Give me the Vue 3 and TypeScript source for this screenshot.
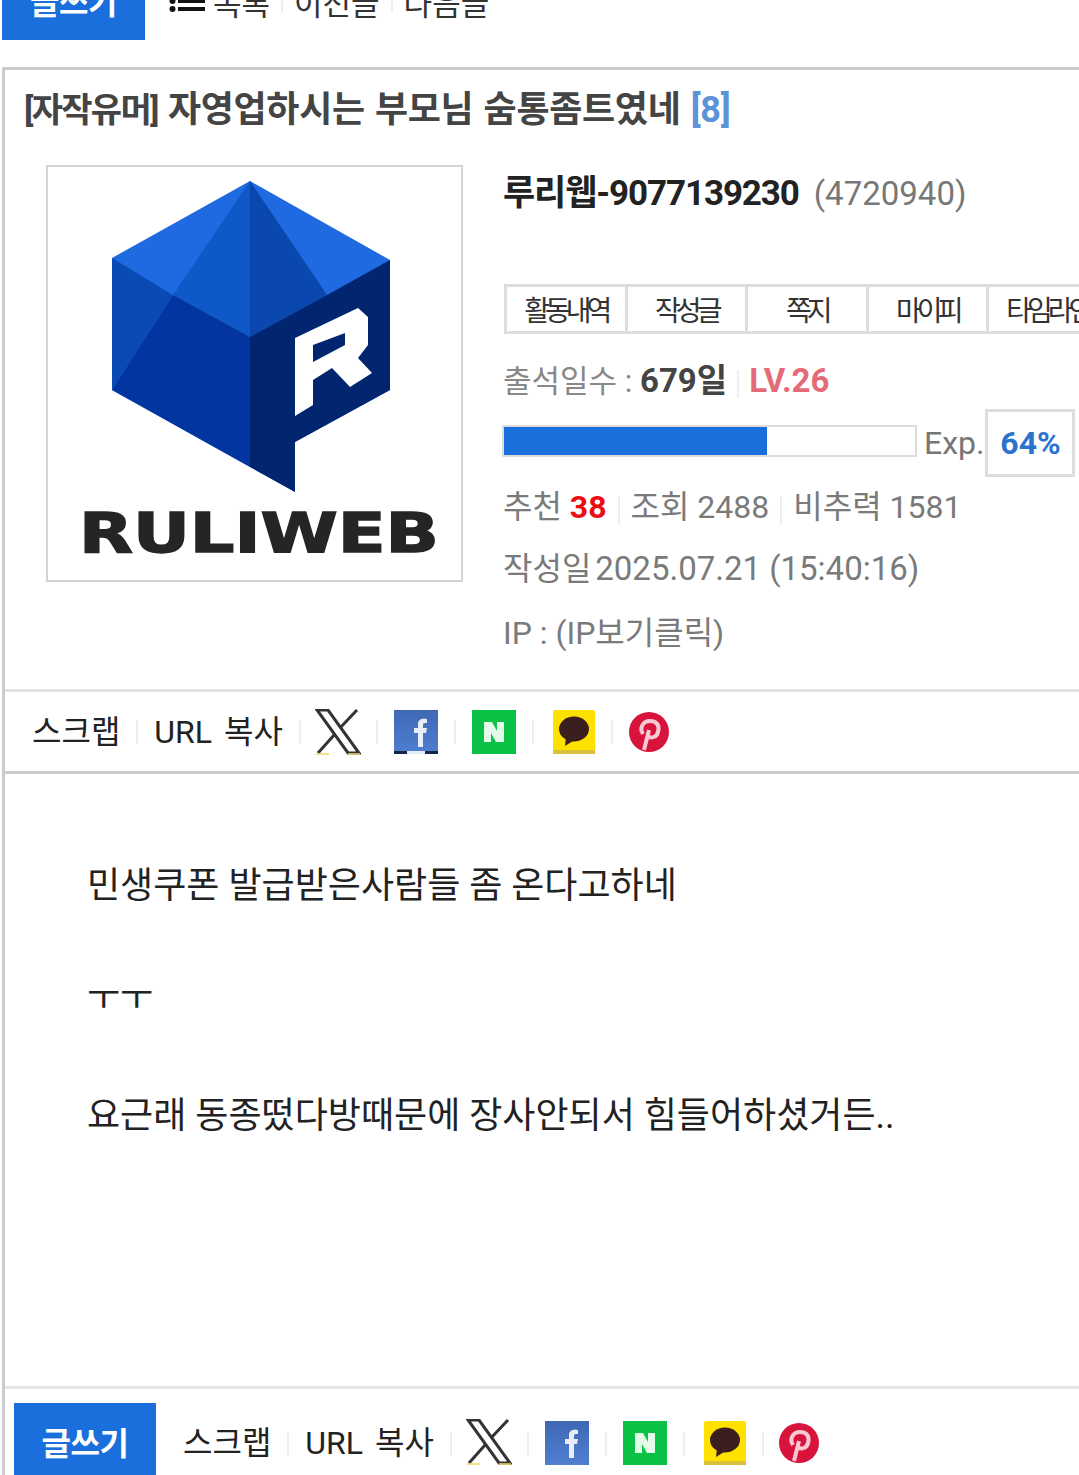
<script setup lang="ts">
const tabs: string[] = ['활동내역', '작성글', '쪽지', '마이피', '타임라인']
</script>

<template>
  <div class="page">
    <div class="topbar">
      <button class="write">글쓰기</button>
      <nav class="topnav">
        <svg class="listicon" width="36" height="24" viewBox="0 0 36 24">
          <circle cx="3.5" cy="3" r="3" fill="#111" />
          <circle cx="3.5" cy="11" r="3" fill="#111" />
          <rect x="9" y="1" width="27" height="4" fill="#111" />
          <rect x="9" y="9" width="27" height="4" fill="#111" />
        </svg>
        <span>목록</span><i class="sep"></i><span>이전글</span><i class="sep"></i><span>다음글</span>
      </nav>
    </div>

    <main class="board">
      <h1 class="title"><span class="prefix">[자작유머]</span> 자영업하시는 부모님 숨통좀트였네 <em>[8]</em></h1>

      <section class="profile">
        <div class="avatar">
          <svg width="413" height="413" viewBox="48 167 413 413">
            <polygon points="250,181 112,258 112,390 295,492 295,442 390,390 390,260" fill="#1f6ae0" />
            <polygon points="250,181 173,295 250,337" fill="#0e58c8" />
            <polygon points="250,181 327,295 250,337" fill="#0a47ae" />
            <polygon points="112,258 173,295 112,390" fill="#0a4ab5" />
            <polygon points="112,390 173,295 250,337 250,467" fill="#0335a0" />
            <polygon points="250,337 327,295 390,260 390,390 295,442 295,492 250,467" fill="#02256f" />
            <path fill="#fff" fill-rule="evenodd" d="M295 338 L358 308 L368 317 L368 345 L358 358 L372 373 L350 387 L332 368 L313 380 L313 405 L295 416 Z M313 345 L345 333 L345 345 L313 362 Z" />
            <text x="79" y="552" class="wordmark" textLength="360" lengthAdjust="spacingAndGlyphs">RULIWEB</text>
          </svg>
        </div>

        <div class="info">
          <div class="nameline">
            <strong class="name">루리웹-9077139230</strong>
            <span class="uid">(4720940)</span>
          </div>
          <div class="tabs">
            <a v-for="t in tabs" :key="t" class="tab"><span>{{ t }}</span></a>
          </div>
          <div class="attend">
            출석일수 : <b>679일</b><i class="sep small"></i><b class="level">LV.26</b>
          </div>
          <div class="exp">
            <div class="track"><div class="fill" :style="{ width: '64%' }"></div></div>
            <span class="explabel">Exp.</span>
            <span class="expbox">64%</span>
          </div>
          <div class="stat stats1">
            추천 <b class="red">38</b><i class="sep small"></i>조회 2488<i class="sep small"></i>비추력 1581
          </div>
          <div class="stat">작성일 <span class="num">2025.07.21 (15:40:16)</span></div>
          <div class="stat ip">IP : (IP보기클릭)</div>
        </div>
      </section>

      <div class="share sharetop">
        <span class="slink">스크랩</span><i class="sep"></i><span class="slink">URL 복사</span><i class="sep"></i>
        <svg class="ico x" width="46" height="46" viewBox="0 0 46 46">
          <path d="M2 1 H13 L44 44 H33 Z" fill="#fff" stroke="#333" stroke-width="3" />
          <path d="M42 1 L25 19 M20 25 L3 44" stroke="#333" stroke-width="3" fill="none" />
          <path d="M1 45 H14 M33 45 H45" stroke="#e9d96a" stroke-width="1.5" />
        </svg><i class="sep"></i>
        <svg class="ico" width="44" height="44" viewBox="0 0 44 44">
          <defs><linearGradient id="fb" x1="0" y1="0" x2="0" y2="1"><stop offset="0" stop-color="#3f68b4" /><stop offset="1" stop-color="#4f7fd0" /></linearGradient></defs>
          <rect width="44" height="44" fill="url(#fb)" />
          <path d="M24 37 V23 H20 V18 H24 V14 C24 10 27 8 33 9 V13 C30 13 29 13 29 15 V18 H33 L32 23 H29 V37 Z" fill="#e8eef8" />
          <rect y="41" width="13" height="3" fill="#14264a" /><rect x="13" y="41" width="18" height="3" fill="#e6ecf6" /><rect x="31" y="41" width="13" height="3" fill="#14264a" />
        </svg><i class="sep"></i>
        <svg class="ico" width="44" height="44" viewBox="0 0 44 44">
          <rect width="44" height="44" fill="#0bc246" />
          <path d="M12 12 H20 L25 21 V12 H32 V32 H24 L19 23 V32 H12 Z" fill="#e4fbe9" />
        </svg><i class="sep kk"></i>
        <svg class="ico" width="42" height="44" viewBox="0 0 42 44">
          <rect width="42" height="44" rx="2" fill="#ffe100" />
          <rect y="40" width="42" height="4" fill="#d8bf3c" />
          <ellipse cx="21" cy="19" rx="15" ry="12.5" fill="#3b1e1e" />
          <path d="M13 27 L12 36 L20 31 Z" fill="#3b1e1e" />
        </svg><i class="sep"></i>
        <svg class="ico" width="40" height="44" viewBox="0 0 40 44">
          <circle cx="20" cy="22" r="20" fill="#d9143c" />
          <path d="M15 40 L20 20 M14 24 C10 18 14 11 21 11 C28 11 31 16 29 22 C28 27 22 29 19 26" stroke="#f7c9d2" stroke-width="4" fill="none" />
        </svg>
      </div>

      <article class="content">
        <p>민생쿠폰 발급받은사람들 좀 온다고하네</p>
        <p class="blank">&nbsp;</p>
        <p class="cry">ㅜㅜ</p>
        <p class="blank">&nbsp;</p>
        <p>요근래 동종떴다방때문에 장사안되서 힘들어하셨거든..</p>
      </article>

      <div class="share sharebottom">
        <button class="write">글쓰기</button>
        <span class="slink first">스크랩</span><i class="sep"></i><span class="slink">URL 복사</span><i class="sep"></i>
        <svg class="ico x" width="46" height="46" viewBox="0 0 46 46">
          <path d="M2 1 H13 L44 44 H33 Z" fill="#fff" stroke="#333" stroke-width="3" />
          <path d="M42 1 L25 19 M20 25 L3 44" stroke="#333" stroke-width="3" fill="none" />
          <path d="M1 45 H14 M33 45 H45" stroke="#e9d96a" stroke-width="1.5" />
        </svg><i class="sep"></i>
        <svg class="ico" width="44" height="44" viewBox="0 0 44 44">
          <rect width="44" height="44" fill="url(#fb)" />
          <path d="M24 37 V23 H20 V18 H24 V14 C24 10 27 8 33 9 V13 C30 13 29 13 29 15 V18 H33 L32 23 H29 V37 Z" fill="#e8eef8" />
        </svg><i class="sep"></i>
        <svg class="ico" width="44" height="44" viewBox="0 0 44 44">
          <rect width="44" height="44" fill="#0bc246" />
          <path d="M12 12 H20 L25 21 V12 H32 V32 H24 L19 23 V32 H12 Z" fill="#e4fbe9" />
        </svg><i class="sep kk"></i>
        <svg class="ico" width="42" height="44" viewBox="0 0 42 44">
          <rect width="42" height="44" rx="2" fill="#ffe100" />
          <rect y="40" width="42" height="4" fill="#d8bf3c" />
          <ellipse cx="21" cy="19" rx="15" ry="12.5" fill="#3b1e1e" />
          <path d="M13 27 L12 36 L20 31 Z" fill="#3b1e1e" />
        </svg><i class="sep"></i>
        <svg class="ico pin" width="40" height="44" viewBox="0 0 40 44">
          <circle cx="20" cy="22" r="20" fill="#d9143c" />
          <path d="M15 40 L20 20 M14 24 C10 18 14 11 21 11 C28 11 31 16 29 22 C28 27 22 29 19 26" stroke="#f7c9d2" stroke-width="4" fill="none" />
        </svg>
      </div>
    </main>
  </div>
</template>

<style scoped>
.page {
  width: 1079px;
  height: 1475px;
  overflow: hidden;
  background: #fff;
  font-family: Roboto, "Noto Sans CJK KR", sans-serif;
  color: #777;
}
.write {
  flex: none;
  width: 143px;
  height: 78px;
  border: 0;
  padding: 0 0 3px;
  background: #1a6fdc;
  color: #fff;
  font: 700 32px Roboto, "Noto Sans CJK KR", sans-serif;
  letter-spacing: -0.5px;
}
.topbar {
  display: flex;
  align-items: center;
  margin: -38px 0 0 2px;
  height: 78px;
}
.topnav {
  display: flex;
  align-items: center;
  margin-left: 24px;
  font-size: 31px;
  color: #333;
}
.listicon { margin-right: 8px; margin-top: 18px; }
.sep {
  display: inline-block;
  flex: none;
  width: 2px;
  height: 24px;
  background: #eee;
  margin: 0 16px;
  vertical-align: middle;
}
.topnav .sep { margin: 0 11px; }
.sep.small { height: 28px; margin: 0 11px; }
.attend .sep.small { margin: 0 10px; }
.board {
  margin: 27px 0 0 2px;
  width: 1200px;
  height: 1500px;
  border: 3px solid #ccc;
  box-sizing: border-box;
  display: flex;
  flex-direction: column;
}
.title {
  margin: 17px 0 0 19px;
  font-size: 36px;
  line-height: 46px;
  font-weight: 700;
  letter-spacing: -0.3px;
  word-spacing: 1.5px;
  color: #444;
  white-space: nowrap;
}
.title .prefix { font-size: 34px; letter-spacing: -1.7px; }
.title em { font-style: normal; color: #5b93d6; }
.profile {
  display: flex;
  margin: 32px 0 0 41px;
  height: 524px;
}
.avatar {
  flex: none;
  width: 417px;
  height: 417px;
  box-sizing: border-box;
  border: 2px solid #d4d4d4;
}
.avatar svg { display: block; }
.wordmark {
  font: 700 56px "DejaVu Sans", sans-serif;
  fill: #252525;
  stroke: #252525;
  stroke-width: 1.5px;
}
.info {
  margin-left: 41px;
  min-width: 0;
  flex: 1;
}
.nameline {
  display: flex;
  align-items: baseline;
  gap: 15px;
  height: 58px;
  line-height: 58px;
  margin-left: -1px;
}
.name {
  font-size: 35px;
  color: #222;
  letter-spacing: -1.1px;
}
.uid { font-size: 33px; color: #777; }
.tabs {
  display: flex;
  margin-top: 61px;
  width: 610px;
  height: 50px;
  border: solid #ddd;
  border-width: 3px 0 3px 3px;
  box-sizing: border-box;
}
.tab {
  width: 120.5px;
  flex: none;
  box-sizing: border-box;
  border-right: 3px solid #ddd;
  display: flex;
  align-items: center;
  justify-content: center;
  font-size: 28px;
  letter-spacing: -5px;
  color: #333;
  white-space: nowrap;
  overflow: hidden;
}
.attend {
  margin: 23px 0 0 -1px;
  height: 48px;
  line-height: 48px;
  font-size: 31px;
  white-space: nowrap;
  color: #888;
}
.attend b { color: #444; font-size: 33px; }
.attend .level { color: #e56a78; }
.exp {
  display: flex;
  align-items: center;
  margin-top: 4px;
  margin-left: -2px;
  height: 68px;
}
.track {
  width: 415px;
  height: 32px;
  margin-bottom: 5px;
  border: 2px solid #ddd;
  box-sizing: border-box;
  flex: none;
}
.fill { height: 100%; background: #1a6fdc; }
.explabel {
  margin-left: 7px;
  font-size: 32px;
  color: #777;
}
.expbox {
  margin-left: 1px;
  width: 90px;
  height: 68px;
  flex: none;
  box-sizing: border-box;
  border: 3px solid #ddd;
  display: flex;
  align-items: center;
  justify-content: center;
  font-size: 32px;
  font-weight: 700;
  color: #2b73cc;
}
.stat {
  height: 62px;
  line-height: 62px;
  margin-left: -1px;
  font-size: 32px;
  color: #7a7a7a;
  white-space: nowrap;
}
.stats1 { margin-top: -1px; }
.ip { margin-top: 2px; }
.num { font-size: 33px; margin-left: -4px; }
.red { color: #ec0c14; }
.share {
  display: flex;
  align-items: center;
  white-space: nowrap;
}
.sharetop {
  height: 85px;
  padding-left: 27px;
  border-top: 3px solid #e2e2e2;
  border-bottom: 3px solid #ccc;
  box-sizing: border-box;
}
.slink {
  font-size: 32px;
  word-spacing: 4px;
  color: #222;
}
.sharetop .slink { margin-top: -6px; }
.sharetop .ico { margin-top: 1px; }
.ico { display: block; flex: none; filter: blur(0.5px); }
.ico.x { margin-left: -2px; margin-right: -1px; }
.sep.kk { margin-right: 19px; }
.content {
  height: 612px;
  padding: 84px 0 0 82px;
  box-sizing: border-box;
  font-size: 36px;
  line-height: 57.5px;
  color: #222;
}
.content p { margin: 0; white-space: nowrap; }
.content .cry { margin: -3px 0 3px; }
.sharebottom {
  height: 100px;
  padding: 14px 0 0 9px;
  box-sizing: border-box;
  border-top: 3px solid #e5e5e5;
  align-items: flex-start;
}
.sharebottom .write { width: 142px; }
.sharebottom .slink, .sharebottom .sep, .sharebottom .ico { margin-top: 18px; }
.sharebottom .slink { line-height: 46px; margin-top: 17px; }
.sharebottom .sep { margin-top: 29px; }
.sharebottom .ico.x { margin-top: 16px; }
.sharebottom .ico.pin { margin-left: -1px; }
.slink.first { margin-left: 27px; }
</style>
